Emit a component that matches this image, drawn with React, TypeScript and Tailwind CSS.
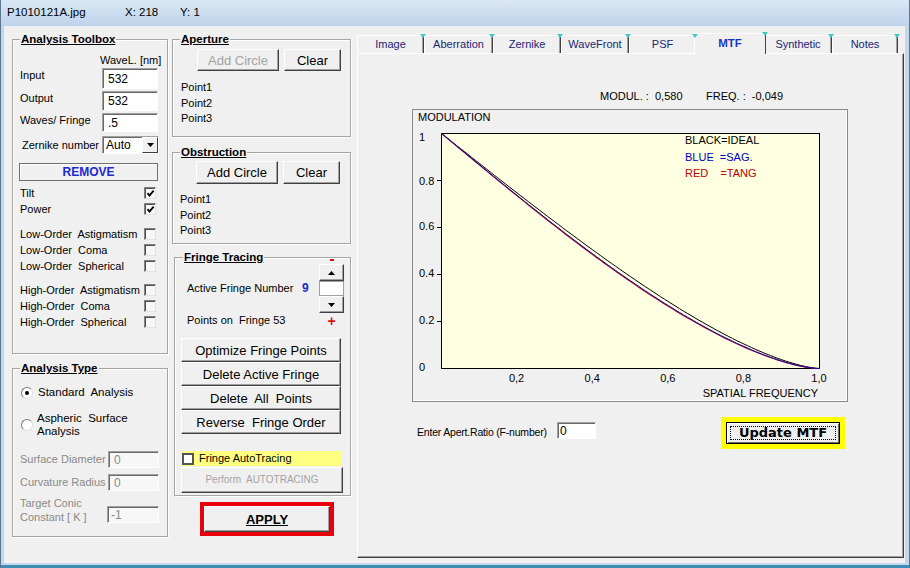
import React from "react";

type P = { className?: string; children?: React.ReactNode };

function Btn({ className = "", children, disabled = false }: P & { disabled?: boolean }) {
  return (
    <div
      className={`flex items-center justify-center bg-[#f0f0f0] border border-t-white border-l-white border-r-[#404040] border-b-[#404040] shadow-[inset_-1px_-1px_0_#a0a0a0] text-[13px] leading-none ${
        disabled ? "text-[#a3a3a3]" : "text-black"
      } ${className}`}
    >
      {children}
    </div>
  );
}

function Field({ className = "", children, disabled = false }: P & { disabled?: boolean }) {
  return (
    <div
      className={`flex items-center border border-t-[#a0a0a0] border-l-[#a0a0a0] border-b-white border-r-white shadow-[inset_1px_1px_0_#696969] text-[12px] pl-[5px] ${
        disabled ? "bg-[#f7f7f7] text-[#8a8a8a]" : "bg-white text-black"
      } ${className}`}
    >
      {children}
    </div>
  );
}

function Group({ title, className = "", children, left = "left-[7px]" }: P & { title: string; left?: string }) {
  return (
    <div className={`relative border border-[#a5a5a5] shadow-[inset_1px_1px_0_#fff,1px_1px_0_#fff] ${className}`}>
      <span className={`absolute -top-[8px] ${left} bg-[#f0f0f0] px-[1px] text-[11.5px] font-bold underline leading-[14px] text-black`}>
        {title}
      </span>
      {children}
    </div>
  );
}

function Check({ checked = false }: { checked?: boolean }) {
  return (
    <div className="w-[12px] h-[12px] bg-[#f6f6f6] border border-t-[#808080] border-l-[#808080] border-r-[#e2e2e2] border-b-[#e2e2e2] shadow-[inset_1px_1px_0_#505050] flex items-center justify-center">
      {checked && (
        <svg width="9" height="9" viewBox="0 0 9 9">
          <path d="M1.5 4.2 L3.5 6.6 L7.6 1.6" stroke="#000" strokeWidth="1.8" fill="none" />
        </svg>
      )}
    </div>
  );
}

function Radio({ checked = false }: { checked?: boolean }) {
  return (
    <div className="w-[12px] h-[12px] rounded-full bg-white border border-t-[#7a7a7a] border-l-[#7a7a7a] border-r-[#e0e0e0] border-b-[#e0e0e0] flex items-center justify-center shrink-0">
      {checked && <div className="w-[4px] h-[4px] rounded-full bg-black" />}
    </div>
  );
}

function CheckRow({ label, checked = false }: { label: string; checked?: boolean }) {
  return (
    <div className="h-[16px] flex items-center">
      <span className="w-[124px] whitespace-pre">{label}</span>
      <Check checked={checked} />
    </div>
  );
}

function Chart() {
  const X0 = 28,
    X1 = 406,
    Y0 = 23,
    Y1 = 258;
  const mtf = (v: number) => (v >= 1 ? 0 : (2 / Math.PI) * (Math.acos(v) - v * Math.sqrt(1 - v * v)));
  const pts = (fn: (v: number) => number) =>
    Array.from({ length: 101 }, (_, i) => {
      const v = i / 100;
      return `${(X0 + 0.5 + v * (X1 - X0)).toFixed(1)},${(Y1 + 0.5 - fn(v) * (Y1 - Y0)).toFixed(1)}`;
    }).join(" ");
  const blue = (v: number) => mtf(v) - 0.018 * Math.sin(Math.PI * v);
  const red = (v: number) => mtf(v) - 0.021 * Math.sin(Math.PI * v);
  const ty = (v: number) => Y1 - v * (Y1 - Y0) + 0.5;
  const xl = [
    ["0,2", 0.2],
    ["0,4", 0.4],
    ["0,6", 0.6],
    ["0,8", 0.8],
    ["1,0", 1.0],
  ] as const;
  const font = { fontFamily: "'Liberation Sans', Arial, sans-serif", fontSize: 11 };
  return (
    <svg width="434" height="291" style={font}>
      <rect x={X0 + 0.5} y={Y0 + 0.5} width={X1 - X0} height={Y1 - Y0} fill="#ffffe1" stroke="#000" />
      {[0.2, 0.4, 0.6, 0.8].map((v) => (
        <line key={v} x1={X0 - 4} x2={X0} y1={ty(v)} y2={ty(v)} stroke="#000" />
      ))}
      <text x="5" y="7" dominantBaseline="central">MODULATION</text>
      <text x="6" y="27" dominantBaseline="central">1</text>
      <text x="6" y="71" dominantBaseline="central">0.8</text>
      <text x="6" y="116" dominantBaseline="central">0.6</text>
      <text x="6" y="163" dominantBaseline="central">0.4</text>
      <text x="6" y="210" dominantBaseline="central">0.2</text>
      <text x="6" y="257" dominantBaseline="central">0</text>
      {xl.map(([t, v]) => (
        <text key={t} x={X0 + v * (X1 - X0)} y="268" textAnchor="middle" dominantBaseline="central">
          {t}
        </text>
      ))}
      <text x="405" y="283" textAnchor="end" dominantBaseline="central">SPATIAL FREQUENCY</text>
      <text x="272" y="30" dominantBaseline="central" fill="#000">BLACK=IDEAL</text>
      <text x="272" y="47" dominantBaseline="central" fill="#0000c0" style={{ whiteSpace: "pre" }}>
        {"BLUE  =SAG."}
      </text>
      <text x="272" y="63" dominantBaseline="central" fill="#c00000" style={{ whiteSpace: "pre" }}>
        {"RED    =TANG"}
      </text>
      <polyline points={pts(mtf)} fill="none" stroke="#000" strokeWidth="1" />
      <polyline points={pts(red)} fill="none" stroke="#b00020" strokeWidth="1.2" />
      <polyline points={pts(blue)} fill="none" stroke="#1010b0" strokeWidth="1" />
    </svg>
  );
}

const tabs: { name: string; w: string }[] = [
  { name: "Image", w: "w-[67px]" },
  { name: "Aberration", w: "w-[69px]" },
  { name: "Zernike", w: "w-[68px]" },
  { name: "WaveFront", w: "w-[68px]" },
  { name: "PSF", w: "w-[67px]" },
  { name: "MTF", w: "w-[68px]" },
  { name: "Synthetic", w: "w-[68px]" },
  { name: "Notes", w: "w-[66px]" },
];

function Tri() {
  return (
    <div className="absolute -top-[2px] -right-[3px] w-0 h-0 border-l-[3px] border-r-[3px] border-t-[4px] border-l-transparent border-r-transparent border-t-[#40c8c8] z-20" />
  );
}

export default function App() {
  return (
    <div className="w-[910px] h-[568px] flex flex-col bg-[#c2d6ec] border-l border-r border-[#5d7690] overflow-hidden font-['Liberation_Sans',Arial,sans-serif] text-[11px] text-black">
      {/* Title bar */}
      <div className="h-[26px] shrink-0 bg-gradient-to-b from-[#dae7f5] to-[#bdd3ea] flex items-center text-[11.5px] text-black pl-[6px]">
        <span className="w-[118px]">P1010121A.jpg</span>
        <span className="w-[55px]">X: 218</span>
        <span>Y: 1</span>
      </div>

      {/* Client */}
      <div className="h-[537px] shrink-0 ml-[3px] mr-[4px] bg-[#f0f0f0] flex items-start">
        {/* Left column */}
        <div className="ml-[8px] mt-[13px] w-[156px] flex flex-col">
          <Group title="Analysis Toolbox" className="h-[315px]">
            <div className="pl-[7px] flex flex-col">
              <div className="mt-[13px] h-[14px] leading-[14px] pl-[80px]">WaveL. [nm]</div>
              <div className="mt-[1px] flex items-start">
                <span className="w-[82px] leading-[14px]">Input</span>
                <Field className="w-[56px] h-[21px]">532</Field>
              </div>
              <div className="mt-[2px] flex items-start">
                <span className="w-[82px] leading-[14px]">Output</span>
                <Field className="w-[56px] h-[20px]">532</Field>
              </div>
              <div className="mt-[2px] flex items-start">
                <span className="w-[82px] leading-[14px] whitespace-pre">Waves/ Fringe</span>
                <Field className="w-[56px] h-[19px]">.5</Field>
              </div>
              <div className="mt-[4px] flex items-center">
                <span className="w-[82px] pl-[2px] leading-[14px] whitespace-nowrap">Zernike number</span>
                <div className="w-[57px] h-[18px] flex bg-white border border-t-[#a0a0a0] border-l-[#a0a0a0] border-b-white border-r-white shadow-[inset_1px_1px_0_#696969]">
                  <span className="flex-1 pl-[3px] text-[12px] leading-[16px]">Auto</span>
                  <div className="w-[16px] h-full flex items-center justify-center bg-[#f0f0f0] border border-t-white border-l-white border-r-[#404040] border-b-[#404040]">
                    <svg width="7" height="4" viewBox="0 0 7 4">
                      <path d="M0 0 H7 L3.5 4 Z" fill="#000" />
                    </svg>
                  </div>
                </div>
              </div>
              <div className="mt-[9px] -ml-[1px] w-[139px] h-[18px] flex items-center justify-center border border-[#6f6f6f] shadow-[inset_1px_1px_0_#fff] text-[12px] font-bold text-[#1c2ad0]">
                REMOVE
              </div>
              <div className="mt-[4px]">
                <CheckRow label="Tilt" checked />
                <CheckRow label="Power" checked />
              </div>
              <div className="mt-[9px]">
                <CheckRow label="Low-Order  Astigmatism" />
                <CheckRow label="Low-Order  Coma" />
                <CheckRow label="Low-Order  Spherical" />
              </div>
              <div className="mt-[8px]">
                <CheckRow label="High-Order  Astigmatism" />
                <CheckRow label="High-Order  Coma" />
                <CheckRow label="High-Order  Spherical" />
              </div>
            </div>
          </Group>

          <Group title="Analysis Type" className="mt-[14px] h-[169px]">
            <div className="flex flex-col">
              <div className="mt-[17px] pl-[8px] h-[14px] flex items-center">
                <Radio checked />
                <span className="ml-[5px] whitespace-pre text-[11.5px]">Standard  Analysis</span>
              </div>
              <div className="mt-[12px] pl-[8px] h-[26px] flex items-center">
                <Radio />
                <span className="ml-[4px] leading-[13px] whitespace-pre text-[11.5px]">
                  {"Aspheric  Surface\nAnalysis"}
                </span>
              </div>
              <div className="mt-[13px] pl-[7px] h-[17px] flex items-center">
                <span className="w-[88px] text-[#8a8a8a] text-[11px] whitespace-nowrap">Surface Diameter</span>
                <Field disabled className="w-[51px] h-[17px]">0</Field>
              </div>
              <div className="mt-[6px] pl-[7px] h-[17px] flex items-center">
                <span className="w-[88px] text-[#8a8a8a] text-[11px] whitespace-nowrap">Curvature Radius</span>
                <Field disabled className="w-[51px] h-[17px]">0</Field>
              </div>
              <div className="mt-[5px] pl-[7px] flex items-start">
                <span className="w-[87px] text-[#8a8a8a] text-[11px] leading-[14px] whitespace-pre">
                  {"Target Conic\nConstant [ K ]"}
                </span>
                <Field disabled className="mt-[10px] w-[52px] h-[17px] !pl-[3px]">-1</Field>
              </div>
            </div>
          </Group>
        </div>

        {/* Middle column */}
        <div className="ml-[4px] mt-[13px] w-[179px] flex flex-col">
          <Group title="Aperture" className="h-[98px]">
            <div className="flex mt-[9px] ml-[24px]">
              <Btn disabled className="w-[82px] h-[22px] text-[12.5px]">Add Circle</Btn>
              <Btn className="ml-[5px] w-[57px] h-[22px]">Clear</Btn>
            </div>
            <div className="mt-[9px] pl-[8px] leading-[15.5px]">
              <div>Point1</div>
              <div>Point2</div>
              <div>Point3</div>
            </div>
          </Group>

          <Group title="Obstruction" className="mt-[15px] h-[92px]">
            <div className="flex mt-[8px] ml-[23px]">
              <Btn className="w-[82px] h-[23px]">Add Circle</Btn>
              <Btn className="ml-[5px] w-[57px] h-[23px]">Clear</Btn>
            </div>
            <div className="mt-[8px] pl-[7px] leading-[15.5px]">
              <div>Point1</div>
              <div>Point2</div>
              <div>Point3</div>
            </div>
          </Group>

          <Group title="Fringe Tracing" left="left-[8px]" className="mt-[13px] ml-[2px] w-[177px] h-[239px]">
            <div className="flex h-[80px]">
              <div className="pl-[12px] flex flex-col">
                <div className="mt-[23px] h-[14px] flex items-center">
                  <span className="w-[115px]">Active Fringe Number</span>
                  <span className="text-[12px] font-bold text-[#1a2dc8]">9</span>
                </div>
                <div className="mt-[18px] h-[14px] flex items-center whitespace-pre">Points on  Fringe 53</div>
              </div>
              <div className="ml-auto mr-[6px] w-[25px] flex flex-col items-center">
                <div className="mt-[1px] w-[4px] h-[2px] bg-[#e01010]" />
                <Btn className="mt-[3px] w-[25px] h-[17px]">
                  <svg width="7" height="4" viewBox="0 0 7 4">
                    <path d="M0 4 H7 L3.5 0 Z" fill="#000" />
                  </svg>
                </Btn>
                <div className="w-[25px] h-[15px] bg-white border border-[#a0a0a0]" />
                <Btn className="w-[25px] h-[17px]">
                  <svg width="7" height="4" viewBox="0 0 7 4">
                    <path d="M0 0 H7 L3.5 4 Z" fill="#000" />
                  </svg>
                </Btn>
                <div className="mt-[1px] h-[14px] leading-[14px] text-[14px] font-bold text-[#e01010]">+</div>
              </div>
            </div>
            <div className="ml-[6px] flex flex-col">
              <Btn className="w-[160px] h-[24px]">Optimize Fringe Points</Btn>
              <Btn className="w-[160px] h-[24px]">Delete Active Fringe</Btn>
              <Btn className="w-[160px] h-[24px] whitespace-pre">Delete  All  Points</Btn>
              <Btn className="w-[160px] h-[24px] whitespace-pre">Reverse  Fringe Order</Btn>
              <div className="mt-[17px] w-[161px] h-[15px] bg-[#ffff80] flex items-center">
                <div className="ml-[1px] w-[12px] h-[12px] bg-white border-2 border-[#555]" />
                <span className="ml-[5px]">Fringe AutoTracing</span>
              </div>
              <Btn disabled className="mt-[1px] w-[162px] h-[26px] !text-[10px] whitespace-pre">
                Perform  AUTOTRACING
              </Btn>
            </div>
          </Group>

          <div className="mt-[6px] ml-[28px] w-[134px] h-[34px] border-4 border-[#e8000c]">
            <Btn className="w-full h-full text-[13px] font-bold underline">APPLY</Btn>
          </div>
        </div>

        {/* Right: tab control */}
        <div className="ml-[6px] mt-[7px] w-[547px] flex flex-col">
          <div className="h-[20px] flex items-end">
            {tabs.map((t) =>
              t.name === "MTF" ? (
                <div
                  key={t.name}
                  className="relative z-10 -mx-[2px] -mb-[1px] w-[72px] h-[21px] bg-[#f0f0f0] border border-b-0 border-t-white border-l-white border-r-[#404040] rounded-t-[2px] flex items-center justify-center text-[11.5px] font-bold text-[#1836c4]"
                >
                  MTF
                  <Tri />
                </div>
              ) : (
                <div
                  key={t.name}
                  className={`relative ${t.w} h-[18px] bg-[#f0f0f0] border border-b-0 border-t-white border-l-white border-r-[#404040] shadow-[inset_-1px_0_0_#a0a0a0] rounded-t-[2px] flex items-center justify-center text-[11px] text-[#1a2478]`}
                >
                  {t.name}
                  <Tri />
                </div>
              )
            )}
          </div>
          <div className="w-[547px] h-[505px] bg-[#f0f0f0] border border-t-white border-l-white border-r-[#404040] border-b-[#404040] shadow-[inset_-1px_-1px_0_#a0a0a0] flex flex-col">
            <div className="mt-[35px] ml-[242px] h-[14px] flex items-center whitespace-pre">
              <span className="w-[106px]">MODUL. :  0,580</span>
              <span>FREQ. :  -0,049</span>
            </div>
            <div className="mt-[6px] ml-[54px] w-[436px] h-[293px] border border-[#8a8a8a] shadow-[inset_-1px_-1px_0_#fff]">
              <Chart />
            </div>
            <div className="mt-[15px] ml-[59px] w-[428px] flex items-start">
              <span className="mt-[8px] w-[140px] h-[14px] leading-[14px] whitespace-nowrap text-[10.5px] tracking-[-0.2px]">
                Enter Apert.Ratio (F-number)
              </span>
              <Field className="mt-[5px] w-[39px] h-[17px] !pl-[2px]">0</Field>
              <div className="ml-auto w-[124px] h-[32px] bg-[#ffff00] p-[5px]">
                <div className="w-full h-full border border-black bg-[#f0f0f0] shadow-[inset_1px_1px_0_#fff,inset_-1px_-1px_0_#696969] p-[3px]">
                  <div className="w-full h-full border border-dotted border-black flex items-center justify-center font-['DejaVu_Sans',Verdana,sans-serif] text-[13px] font-bold">
                    Update MTF
                  </div>
                </div>
              </div>
            </div>
          </div>
        </div>
      </div>
      <div className="flex-1 border-b-[3px] border-[#3d8db5]" />
    </div>
  );
}
